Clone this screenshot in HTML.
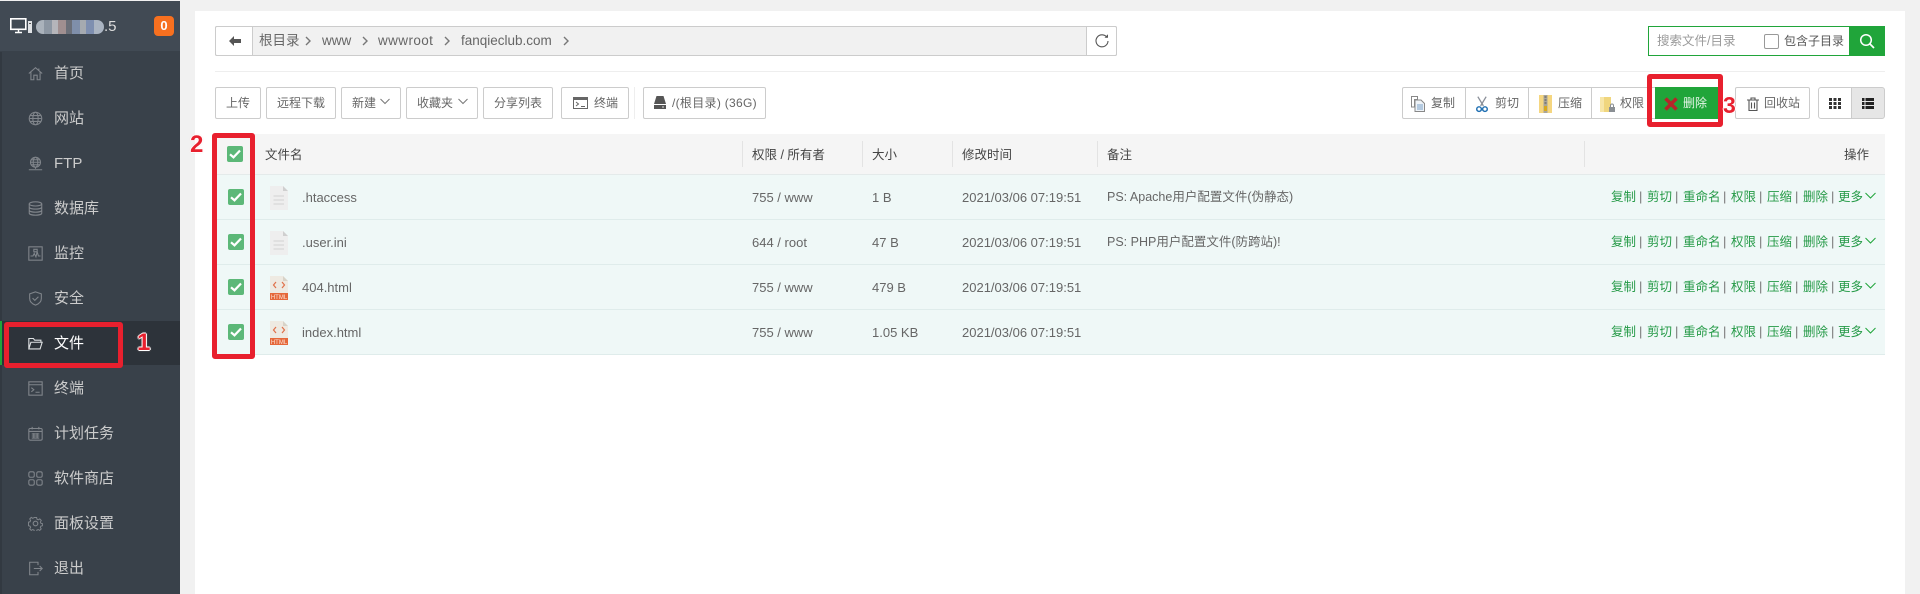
<!DOCTYPE html>
<html lang="zh"><head><meta charset="utf-8"><title>文件</title>
<style>
*{box-sizing:border-box}
html,body{margin:0;padding:0;width:1920px;height:594px;overflow:hidden;background:#f1f1f1;font-family:"Liberation Sans","Noto Sans CJK SC",sans-serif;font-size:13px;color:#666}
.a{position:absolute;white-space:nowrap}
#side{position:absolute;left:0;top:1px;width:180px;height:593px;background:#39414a}
#stripe{position:absolute;left:0;top:51px;width:2px;height:542px;background:#323941}
#head{position:absolute;left:0;top:0;width:180px;height:50px;background:#414a54}
.nav{position:absolute;left:54px;width:120px;height:20px;line-height:20px;font-size:15px;color:#ccc;white-space:nowrap}
.ni{position:absolute;left:28px;width:15px;height:15px;fill:none;stroke:#80858b;stroke-width:1.300}
#panel{position:absolute;left:195px;top:11px;width:1710px;height:583px;background:#fff}
.b{position:absolute;top:87px;height:32px;border:1px solid #ccc;border-radius:2px;background:#fff;color:#666;font-size:12px;line-height:30px;text-align:center;white-space:nowrap}
.row{position:absolute;left:215px;width:1670px;height:45px;background:#eff8f7;border-bottom:1px solid #dfeceb}
.cell{position:absolute;top:0;line-height:45px;white-space:nowrap;color:#666;font-size:13px}
.cb{position:absolute;left:13px;top:14px;width:16px;height:16px;background:#5cb878;border-radius:2px}
.cb svg,.hcb svg{display:block}
.fi{position:absolute;left:55px;top:11px;width:18px;height:24px}
.act{position:absolute;top:0;line-height:45px;font-size:12.500px;color:#259a47;white-space:nowrap}
.sp{position:absolute;top:0;line-height:44px;font-size:13px;color:#777}
.th{position:absolute;top:134px;line-height:42px;font-size:12.500px;color:#444;white-space:nowrap}
.sep{position:absolute;top:141px;width:1px;height:26px;background:#e3e3e3}
.red{position:absolute;border:5px solid #e8202e;border-radius:3px}
.num{position:absolute;color:#e8202e;font-weight:bold;font-family:"Liberation Sans",sans-serif;text-shadow:-1px 0 #fff,1px 0 #fff,0 -1px #fff,0 1px #fff,0 0 2px #f7c6c9}
.crumb{position:absolute;top:31px;line-height:20px;color:#666;font-size:13.500px;white-space:nowrap}
.ch{position:absolute;top:36px}
</style></head>
<body>
<svg width="0" height="0" style="position:absolute">
<symbol id="check" viewBox="0 0 16 16"><path d="M3 8.300l3.500 3 6.500-6.800" fill="none" stroke="#fff" stroke-width="2.200"/></symbol>
<symbol id="doc" viewBox="0 0 18 24"><path d="M0 0h13l5 5v19H0z" fill="#eeeeee"/><path d="M13 0l5 5h-5z" fill="#cfcfcf"/><path d="M3.500 10h10.500M3.500 14h10.500M3.500 18h10.500" stroke="#dcdcdc" stroke-width="1.500"/></symbol>
<symbol id="html" viewBox="0 0 18 24"><path d="M0 0h13l5 5v12H0z" fill="#eeeae2"/><path d="M13 0l5 5h-5z" fill="#d8d3c8"/><path d="M6 6L3.500 9 6 12M12 6l2.500 3L12 12" fill="none" stroke="#e0714a" stroke-width="1.200"/><rect y="17" width="18" height="7" fill="#e5683a"/><text x="9" y="23" text-anchor="middle" font-size="6" fill="#fbe3d8" font-family="Liberation Sans">HTML</text></symbol>
<symbol id="chev" viewBox="0 0 7 10"><path d="M1 1l4 4-4 4" fill="none" stroke="#777" stroke-width="1.400"/></symbol>
</svg>

<div id="side">
<div id="head"></div>
<div id="stripe"></div>
<svg class="a" style="left:10px;top:17px" width="23" height="17" viewBox="0 0 23 17"><rect x=".8" y=".8" width="15" height="10.500" fill="none" stroke="#fff" stroke-width="1.600"/><path d="M5 14.500h7M8.500 12v2.500" stroke="#fff" stroke-width="1.400"/><rect x="18" y="3" width="4" height="12" fill="#dfe2e5"/><rect x="19" y="5" width="2" height="1" fill="#555"/></svg>
<div class="a" style="left:36px;top:19px;width:68px;height:14px;border-radius:7px;overflow:hidden;background:linear-gradient(90deg,#aab2bb 0 8px,#8d97a3 8px 16px,#b5b5ba 16px 22px,#a08f90 22px 30px,#6b6f78 30px 36px,#7f8faa 36px 44px,#a5aab0 44px 50px,#7e8fb0 50px 58px,#aab4c2 58px 68px)"></div>
<div class="a" style="left:104px;top:16px;line-height:20px;font-size:15px;color:#ddd">.5</div>
<div class="a" style="left:154px;top:15px;width:20px;height:20px;border-radius:4px;background:#f7701f;color:#fff;font-weight:bold;font-size:13px;line-height:20px;text-align:center">0</div>

<div class="a" style="left:2px;top:320px;width:178px;height:44px;background:#2d333a"></div>
<div class="a" style="left:0;top:320px;width:2px;height:44px;background:#20a53a"></div>

<svg class="ni" style="top:65px" viewBox="0 0 18 18"><path d="M1 9l8-7 8 7M3.500 7.500V16.500H7V11h4v5.500h3.500V7.500M13 3v2"/></svg><div class="nav" style="top:63px">首页</div>
<svg class="ni" style="top:110px" viewBox="0 0 18 18"><circle cx="9" cy="9" r="7.500"/><ellipse cx="9" cy="9" rx="3.200" ry="7.500"/><path d="M2 9h14M3 5.500h12M3 12.500h12"/></svg><div class="nav" style="top:108px">网站</div>
<svg class="ni" style="top:155px" viewBox="0 0 18 18"><circle cx="9" cy="7.500" r="6"/><ellipse cx="9" cy="7.500" rx="2.800" ry="6"/><path d="M3 7.500h12M4 4.500h10M4 10.500h10M9 13.500v2M1 16.500h16"/></svg><div class="nav" style="top:153px">FTP</div>
<svg class="ni" style="top:200px" viewBox="0 0 18 18"><ellipse cx="9" cy="3.500" rx="7.500" ry="2.500"/><path d="M1.500 3.500v11c0 1.400 3 2.500 7.500 2.500s7.500-1.100 7.500-2.500v-11M1.500 7.200c0 1.400 3 2.500 7.500 2.500s7.500-1.100 7.500-2.500M1.500 10.900c0 1.400 3 2.500 7.500 2.500s7.500-1.100 7.500-2.500"/></svg><div class="nav" style="top:198px">数据库</div>
<svg class="ni" style="top:245px" viewBox="0 0 18 18"><rect x="1" y="1" width="16" height="16"/><path d="M3 12h3l1.500-3 2 4 1.500-6 1.500 5H15M7 4h4v3H7z"/></svg><div class="nav" style="top:243px">监控</div>
<svg class="ni" style="top:290px" viewBox="0 0 18 18"><path d="M9 1l7 2.500V9c0 4-3 6.500-7 8-4-1.500-7-4-7-8V3.500z"/><path d="M5.500 8.500l2.700 2.700 4.300-4.300"/></svg><div class="nav" style="top:288px">安全</div>
<svg class="ni" style="top:335px;stroke:#dfe2e4" viewBox="0 0 18 18"><path d="M1 15.500V3h5.500l1.500 2h7.500v2.500M1 15.500l2.500-8H17l-2.500 8z"/></svg><div class="nav" style="top:333px;color:#fff">文件</div>
<svg class="ni" style="top:380px" viewBox="0 0 18 18"><rect x="1" y="1" width="16" height="16"/><path d="M1 4.500h16M4 8l3 2.500L4 13M9 13.500h5"/></svg><div class="nav" style="top:378px">终端</div>
<svg class="ni" style="top:425px" viewBox="0 0 18 18"><rect x="1" y="3" width="16" height="14" rx="1.500"/><path d="M5 1v3M13 1v3M1 6.500h16M4.500 9.500h9M4.500 12h9M4.500 14.500h9M7 8.500v6M11 8.500v6"/></svg><div class="nav" style="top:423px">计划任务</div>
<svg class="ni" style="top:470px" viewBox="0 0 18 18"><rect x="1" y="1" width="6.500" height="6.500" rx="1.800"/><rect x="10.500" y="1" width="6.500" height="6.500" rx="1.800"/><rect x="1" y="10.500" width="6.500" height="6.500" rx="1.800"/><rect x="10.500" y="10.500" width="6.500" height="6.500" rx="1.800"/></svg><div class="nav" style="top:468px">软件商店</div>
<svg class="ni" style="top:515px" viewBox="0 0 18 18"><circle cx="9" cy="9" r="2.800"/><path d="M7.500 1h3l.5 2.300 1.700.8 2-1.200 2 2.100-1.200 2 .7 1.700 2 .5v2.800l-2 .5-.8 1.700 1.200 2-2 2-2-1.200-1.700.8-.4 2H7.500l-.5-2-1.700-.8-2 1.200-2-2 1.200-2-.8-1.700-2-.5V7.200l2-.5.8-1.700-1.200-2 2-2.100 2 1.200 1.700-.8z" transform="translate(.9 .9) scale(.9)"/></svg><div class="nav" style="top:513px">面板设置</div>
<svg class="ni" style="top:560px" viewBox="0 0 18 18"><path d="M12 5V1.500H2v15h10V13M7 9h10M14 6l3 3-3 3"/></svg><div class="nav" style="top:558px">退出</div>
</div>

<div id="panel"></div>

<!-- breadcrumb -->
<div class="a" style="left:215px;top:26px;width:902px;height:30px;background:#f1f1f1;border:1px solid #ccc;border-radius:2px"></div>
<div class="a" style="left:215px;top:26px;width:38px;height:30px;background:#fff;border:1px solid #ccc;border-radius:2px 0 0 2px"></div>
<svg class="a" style="left:228px;top:35px" width="13" height="12" viewBox="0 0 13 12"><path d="M6 1L1 6l5 5V8h7V4H6z" fill="#555"/></svg>
<div class="crumb" style="left:259px">根目录</div><svg class="ch" style="left:305px" width="7" height="10"><use href="#chev"/></svg>
<div class="crumb" style="left:322px">www</div><svg class="ch" style="left:362px" width="7" height="10"><use href="#chev"/></svg>
<div class="crumb" style="left:378px;letter-spacing:.4px">wwwroot</div><svg class="ch" style="left:444px" width="7" height="10"><use href="#chev"/></svg>
<div class="crumb" style="left:461px">fanqieclub.com</div><svg class="ch" style="left:563px" width="7" height="10"><use href="#chev"/></svg>
<div class="a" style="left:1086px;top:26px;width:31px;height:30px;background:#fff;border:1px solid #ccc;border-radius:0 2px 2px 0"></div>
<svg class="a" style="left:1094px;top:33px" width="16" height="16" viewBox="0 0 16 16"><path d="M13 4.500A6 6 0 1 0 14 8" fill="none" stroke="#555" stroke-width="1.100"/><path d="M10.500 4.800h3.500V1.300z" fill="#555"/></svg>

<!-- search -->
<div class="a" style="left:1648px;top:26px;width:237px;height:30px;background:#fff;border:1px solid #20a53a"></div>
<div class="a" style="left:1657px;top:31px;line-height:20px;font-size:12.500px;color:#999">搜索文件/目录</div>
<div class="a" style="left:1764px;top:34px;width:15px;height:15px;background:#fff;border:1px solid #999;border-radius:2px"></div>
<div class="a" style="left:1784px;top:31px;line-height:20px;font-size:12px;color:#555">包含子目录</div>
<div class="a" style="left:1849px;top:26px;width:36px;height:30px;background:#20a53a"></div>
<svg class="a" style="left:1859px;top:33px" width="16" height="16" viewBox="0 0 16 16"><circle cx="7" cy="7" r="5.300" fill="none" stroke="#fff" stroke-width="1.500"/><path d="M11 11l4 4" stroke="#fff" stroke-width="1.700"/></svg>

<div class="a" style="left:215px;top:71px;width:1670px;height:1px;background:#eee"></div>

<!-- left toolbar -->
<div class="b" style="left:215px;width:46px">上传</div>
<div class="b" style="left:266px;width:70px">远程下载</div>
<div class="b" style="left:341px;width:60px;text-align:left;padding-left:10px">新建</div>
<svg class="a" style="left:380px;top:98px" width="10" height="7" viewBox="0 0 10 7"><path d="M.5 1l4.500 4.500L9.500 1" fill="none" stroke="#777"/></svg>
<div class="b" style="left:406px;width:72px;text-align:left;padding-left:10px">收藏夹</div>
<svg class="a" style="left:458px;top:98px" width="10" height="7" viewBox="0 0 10 7"><path d="M.5 1l4.500 4.500L9.500 1" fill="none" stroke="#777"/></svg>
<div class="b" style="left:483px;width:70px">分享列表</div>
<div class="b" style="left:561px;width:68px;text-align:left;padding-left:32px">终端</div>
<svg class="a" style="left:573px;top:97px" width="15" height="12" viewBox="0 0 15 12"><rect x=".5" y=".5" width="14" height="11" fill="none" stroke="#666"/><rect x=".5" y=".5" width="14" height="2.500" fill="#666"/><path d="M3 5l2.500 2L3 9M8 9.500h4" fill="none" stroke="#666"/></svg>
<div class="a" style="left:634px;top:87px;width:1px;height:32px;background:#eee"></div>
<div class="b" style="left:643px;width:123px;text-align:left;padding-left:28px;letter-spacing:.3px">/(根目录) (36G)</div>
<svg class="a" style="left:654px;top:96px" width="12" height="13" viewBox="0 0 12 13"><path d="M2.500 0h7L12 8H0z" fill="#555"/><rect y="9" width="12" height="4" fill="#555"/><rect x="8" y="10.500" width="2" height="1" fill="#ddd"/></svg>

<!-- right toolbar -->
<div class="b" style="left:1402px;width:64px;text-align:left;padding-left:28px;border-radius:2px 0 0 2px">复制</div>
<svg class="a" style="left:1411px;top:96px" width="15" height="16" viewBox="0 0 15 16"><path d="M.5.500h6v3h-3V11H.5z" fill="#fff" stroke="#888"/><path d="M4 4h6l3.500 3.500v8H4z" fill="#eef3f8" stroke="#888"/><path d="M6 9h6M6 11h6M6 13h6" stroke="#7aa0c8"/></svg>
<div class="b" style="left:1465px;width:64px;text-align:left;padding-left:29px;border-radius:0">剪切</div>
<svg class="a" style="left:1476px;top:96px" width="12" height="17" viewBox="0 0 13 17"><path d="M2 0l6 10M11 0L5 10" stroke="#8a8f98" stroke-width="1.400"/><circle cx="3.300" cy="13.500" r="2.500" fill="none" stroke="#1f6fb2" stroke-width="1.600"/><circle cx="9.700" cy="13.500" r="2.500" fill="none" stroke="#1f6fb2" stroke-width="1.600"/></svg>
<div class="b" style="left:1528px;width:64px;text-align:left;padding-left:29px;border-radius:0">压缩</div>
<svg class="a" style="left:1539px;top:95px" width="13" height="18" viewBox="0 0 13 18"><rect width="13" height="18" fill="#f5d680"/><rect x="4.500" width="4" height="18" fill="#a9a59a"/><path d="M5.500 2h2M5.500 5h2M5.500 8h2" stroke="#555"/><rect x="5" y="11" width="3" height="5" fill="#d8a91c"/></svg>
<div class="b" style="left:1591px;width:65px;text-align:left;padding-left:28px;border-radius:0;border-right:0">权限</div>
<svg class="a" style="left:1600px;top:96px" width="15" height="17" viewBox="0 0 15 17"><path d="M0 1h11v15H0z" fill="#f0d67e"/><path d="M0 1h4v15H0z" fill="#f7e6a8"/><rect x="9" y="11" width="6" height="5" fill="#8a8f94"/><path d="M10.500 11V9.500a1.500 1.500 0 0 1 3 0V11" fill="none" stroke="#8a8f94"/></svg>
<div class="a" style="left:1655px;top:87px;width:63px;height:32px;background:#20a53a"></div>
<svg class="a" style="left:1664px;top:97px" width="14" height="14" viewBox="0 0 14 14"><path d="M1.500 1.500l11 11M12.500 1.500l-11 11" stroke="#b5262a" stroke-width="3.600"/></svg>
<div class="a" style="left:1683px;top:93px;line-height:20px;font-size:12px;color:#e6f6e9">删除</div>
<div class="b" style="left:1735px;width:75px;text-align:left;padding-left:28px">回收站</div>
<svg class="a" style="left:1747px;top:97px" width="12" height="14" viewBox="0 0 12 14"><path d="M0 3h12M4 3V1h4v2M2 3v10.500h8V3M4.500 5.500v6M7.500 5.500v6" fill="none" stroke="#555" stroke-width="1.100"/></svg>
<div class="b" style="left:1818px;width:34px;border-radius:3px 0 0 3px"></div>
<div class="b" style="left:1851px;width:34px;background:#e6e6e6;border-radius:0 3px 3px 0"></div>
<svg class="a" style="left:1829px;top:98px" width="12" height="11" viewBox="0 0 12 11"><path d="M0 0h3v3H0zM4.500 0h3v3h-3zM9 0h3v3H9zM0 4h3v3H0zM4.500 4h3v3h-3zM9 4h3v3H9zM0 8h3v3H0zM4.500 8h3v3h-3zM9 8h3v3H9z" fill="#333"/></svg>
<svg class="a" style="left:1862px;top:98px" width="12" height="11" viewBox="0 0 12 11"><path d="M0 0h2.500v3H0zM3.500 0H12v3H3.500zM0 4h2.500v3H0zM3.500 4H12v3H3.500zM0 8h2.500v3H0zM3.500 8H12v3H3.500z" fill="#222"/></svg>

<!-- table header -->
<div class="a" style="left:215px;top:134px;width:1670px;height:41px;background:#f5f5f5;border-bottom:1px solid #e4eaea"></div>
<div class="a hcb" style="left:227px;top:146px;width:16px;height:16px;background:#5cb878;border-radius:2px"><svg width="16" height="16"><use href="#check"/></svg></div>
<div class="th" style="left:265px">文件名</div>
<div class="sep" style="left:742px"></div><div class="th" style="left:752px">权限 / 所有者</div>
<div class="sep" style="left:862px"></div><div class="th" style="left:872px">大小</div>
<div class="sep" style="left:952px"></div><div class="th" style="left:962px">修改时间</div>
<div class="sep" style="left:1097px"></div><div class="th" style="left:1107px">备注</div>
<div class="sep" style="left:1584px"></div><div class="th" style="left:1844px">操作</div>

<!-- rows -->
<div class="row" style="top:175px">
<div class="cb"><svg width="16" height="16"><use href="#check"/></svg></div>
<svg class="fi"><use href="#doc"/></svg>
<div class="cell" style="left:87px">.htaccess</div><div class="cell" style="left:537px">755 / www</div><div class="cell" style="left:657px">1 B</div><div class="cell" style="left:747px">2021/03/06 07:19:51</div><div class="cell" style="left:892px;font-size:12.500px">PS: Apache用户配置文件(伪静态)</div>
<span class="act" style="left:1396px">复制</span><span class="sp" style="left:1424px">|</span><span class="act" style="left:1432px">剪切</span><span class="sp" style="left:1460px">|</span><span class="act" style="left:1468px">重命名</span><span class="sp" style="left:1508px">|</span><span class="act" style="left:1516px">权限</span><span class="sp" style="left:1544px">|</span><span class="act" style="left:1552px">压缩</span><span class="sp" style="left:1580px">|</span><span class="act" style="left:1588px">删除</span><span class="sp" style="left:1616px">|</span><span class="act" style="left:1623px">更多</span>
<svg class="a" style="left:1650px;top:17px" width="11" height="8" viewBox="0 0 11 8"><path d="M.5 1l5 5 5-5" fill="none" stroke="#20a53a"/></svg>
</div>
<div class="row" style="top:220px">
<div class="cb"><svg width="16" height="16"><use href="#check"/></svg></div>
<svg class="fi"><use href="#doc"/></svg>
<div class="cell" style="left:87px">.user.ini</div><div class="cell" style="left:537px">644 / root</div><div class="cell" style="left:657px">47 B</div><div class="cell" style="left:747px">2021/03/06 07:19:51</div><div class="cell" style="left:892px;font-size:12.500px">PS: PHP用户配置文件(防跨站)!</div>
<span class="act" style="left:1396px">复制</span><span class="sp" style="left:1424px">|</span><span class="act" style="left:1432px">剪切</span><span class="sp" style="left:1460px">|</span><span class="act" style="left:1468px">重命名</span><span class="sp" style="left:1508px">|</span><span class="act" style="left:1516px">权限</span><span class="sp" style="left:1544px">|</span><span class="act" style="left:1552px">压缩</span><span class="sp" style="left:1580px">|</span><span class="act" style="left:1588px">删除</span><span class="sp" style="left:1616px">|</span><span class="act" style="left:1623px">更多</span>
<svg class="a" style="left:1650px;top:17px" width="11" height="8" viewBox="0 0 11 8"><path d="M.5 1l5 5 5-5" fill="none" stroke="#20a53a"/></svg>
</div>
<div class="row" style="top:265px">
<div class="cb"><svg width="16" height="16"><use href="#check"/></svg></div>
<svg class="fi"><use href="#html"/></svg>
<div class="cell" style="left:87px">404.html</div><div class="cell" style="left:537px">755 / www</div><div class="cell" style="left:657px">479 B</div><div class="cell" style="left:747px">2021/03/06 07:19:51</div>
<span class="act" style="left:1396px">复制</span><span class="sp" style="left:1424px">|</span><span class="act" style="left:1432px">剪切</span><span class="sp" style="left:1460px">|</span><span class="act" style="left:1468px">重命名</span><span class="sp" style="left:1508px">|</span><span class="act" style="left:1516px">权限</span><span class="sp" style="left:1544px">|</span><span class="act" style="left:1552px">压缩</span><span class="sp" style="left:1580px">|</span><span class="act" style="left:1588px">删除</span><span class="sp" style="left:1616px">|</span><span class="act" style="left:1623px">更多</span>
<svg class="a" style="left:1650px;top:17px" width="11" height="8" viewBox="0 0 11 8"><path d="M.5 1l5 5 5-5" fill="none" stroke="#20a53a"/></svg>
</div>
<div class="row" style="top:310px">
<div class="cb"><svg width="16" height="16"><use href="#check"/></svg></div>
<svg class="fi"><use href="#html"/></svg>
<div class="cell" style="left:87px">index.html</div><div class="cell" style="left:537px">755 / www</div><div class="cell" style="left:657px">1.05 KB</div><div class="cell" style="left:747px">2021/03/06 07:19:51</div>
<span class="act" style="left:1396px">复制</span><span class="sp" style="left:1424px">|</span><span class="act" style="left:1432px">剪切</span><span class="sp" style="left:1460px">|</span><span class="act" style="left:1468px">重命名</span><span class="sp" style="left:1508px">|</span><span class="act" style="left:1516px">权限</span><span class="sp" style="left:1544px">|</span><span class="act" style="left:1552px">压缩</span><span class="sp" style="left:1580px">|</span><span class="act" style="left:1588px">删除</span><span class="sp" style="left:1616px">|</span><span class="act" style="left:1623px">更多</span>
<svg class="a" style="left:1650px;top:17px" width="11" height="8" viewBox="0 0 11 8"><path d="M.5 1l5 5 5-5" fill="none" stroke="#20a53a"/></svg>
</div>

<!-- annotations -->
<div class="red" style="left:4px;top:322px;width:119px;height:46px"></div>
<div class="red" style="left:212px;top:133px;width:43px;height:226px"></div>
<div class="red" style="left:1647px;top:74px;width:76px;height:53px"></div>
<div class="num" style="left:137px;top:329px;font-size:24px;line-height:28px">1</div>
<div class="num" style="left:190px;top:131px;font-size:24px;line-height:28px">2</div>
<div class="num" style="left:1723px;top:91px;font-size:23px;line-height:28px">3</div>
</body></html>
